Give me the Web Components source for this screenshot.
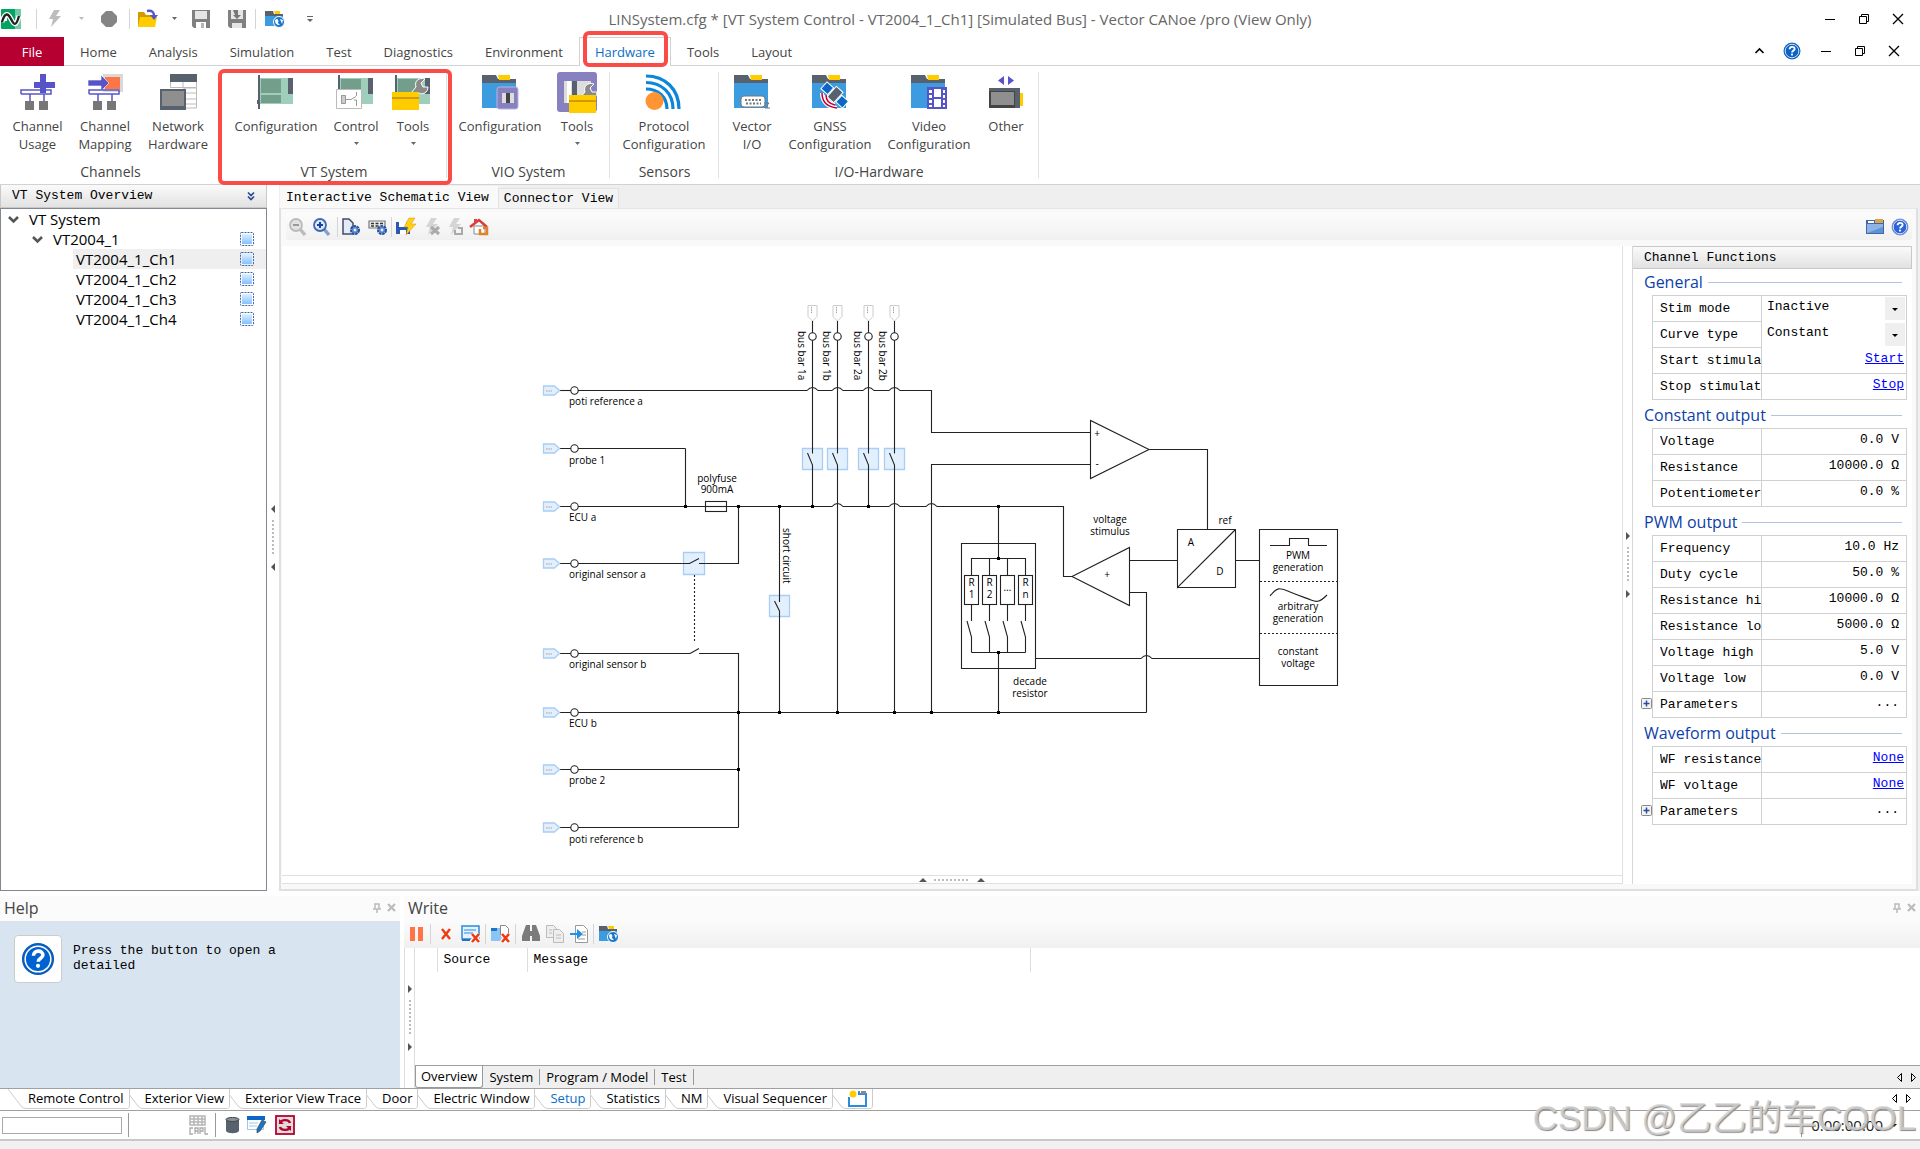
<!DOCTYPE html>
<html lang="en">
<head>
<meta charset="utf-8">
<title>Vector CANoe</title>
<style>
html,body{height:100%;margin:0}
body{background:#fff;font:13px/18px "Open Sans","Noto Sans",sans-serif;color:#444}
</style>
</head>
<body>
<canoe-app></canoe-app>
<script>
const base = `*{box-sizing:border-box}button,input,select{font:inherit;color:inherit;margin:0;padding:0;border:0;background:none;border-radius:0;text-align:inherit}`;
const mono = `font-family:"Liberation Mono","Noto Sans CJK SC",monospace;font-size:13px;color:#000;`;
function define(name, html, init) {
  const t = document.createElement('template');
  t.innerHTML = html.replace('<style>', '<style>' + base);
  customElements.define(name, class extends HTMLElement {
    connectedCallback() {
      if (this.shadowRoot) return;
      this.attachShadow({mode: 'open'}).append(t.content.cloneNode(true));
      if (init) init(this, this.shadowRoot);
    }
  });
}

/* ---------- icons: name -> [width, height, drawing] ---------- */
const folder = `<path fill="#3d9be0" d="M0 6h34v27H0z"/><path fill="#58626e" d="M0 0h14l2 4h18v4H0z"/><path fill="#fc0" d="M16 0h12v5H17z"/>`;
const board = `<path fill="#9fcfbb" d="M3 3h33v26H3z"/><path fill="#749e8c" d="M4 4h20v14H4zM4 20h20v8H4z"/><path fill="#58626e" d="M31 3h5v16h-5zM1 0h2v34H1zM0 25h2v4H0z"/>`;
const wrench = `<path fill="#8a8a8a" stroke="#fff" d="M3 22 13 10C11 4 16 0 22 2l-4 4 2 4h5c0 6-6 8-9 6L8 26z"/>`;
const box = `<path fill="#fc0" d="M0 0h27v18H0z"/><path fill="#d29a00" d="M0 5h27v2H0z"/>`;
const net = `<path fill="none" stroke="#5754c8" stroke-width="1.5" d="M1 20V16h30v4H1M10 20v7M24 20v7"/><path fill="#777" d="M5 27h9v9H5zM19 27h9v9h-9z"/>`;
const gear = `<circle cx="13" cy="12" r="3.6" fill="#9fbce6" stroke="#2450a0" stroke-width="2.8" stroke-dasharray="2.4 .6"/><circle cx="13" cy="12" r="3" fill="#5c86cc"/><circle cx="13" cy="12" r="1.4" fill="#e4eefc"/>`;
const bolt = c => `<path fill="${c}" d="M8 0h6l-4 6h5L5 17l2-8H3z"/>`;
const globe = `<circle cx="13" cy="12" r="5.5" fill="#1775cc" stroke="#fff"/><path fill="#fff" d="M9 10c3-3 4 1 3 3l2 2c-4 0-5-2-5-5zM14 9l3 1-1 4z"/>`;
const sfolder = `<path fill="#3d9be0" d="M0 4h18v12H0z"/><path fill="#58626e" d="M0 1h8l1 3h9v2H0z"/><path fill="#fc0" d="M9 1h6v3h-5z"/>`;
const help = (a, b) => `<circle cx="9" cy="9" r="8" fill="${a}" stroke="${b}"/><circle cx="9" cy="9" r="6.8" fill="none" stroke="#fff" stroke-width=".8"/><path fill="none" stroke="#fff" stroke-width="1.9" d="M6.6 7.3c0-3.2 5-3.2 5-.4 0 1.800-2.500 1.700-2.500 3.600"/><circle cx="9" cy="12.600" r="1.100" fill="#fff"/>`;
const redx = `<path stroke="#fff" stroke-width="5" d="m10 9 7 8m0-8-7 8"/><path stroke="#f03a12" stroke-width="2.600" d="m10 9 7 8m0-8-7 8"/>`;
const I = {
  gap:[1,1,''],
  app:[20,20,`<rect width="20" height="20" rx="1" fill="#00a562"/><path fill="#70caa6" d="M14 0h6v20h-6z"/><path fill="#fff" d="M0 8h6v4H0z"/><path fill="none" stroke="#fff" stroke-width="5" d="M1 13c3-10 6-9 9-3s5 8 8-3"/><path fill="none" stroke="#222" stroke-width="2.400" d="M1 13c3-10 6-9 9-3s5 8 8-3"/>`],
  bolt:[18,18,bolt('#bdbdbd')], stop:[16,16,`<path fill="#858585" d="M5 0h6l5 5v6l-5 5H5l-5-5V5z"/>`],
  open:[20,18,`<path fill="#d29a00" d="M0 2h6l2 3h8v12H0z"/><path fill="#fc0" d="M2 7h17l-2 10H0z"/><path fill="none" stroke="#5754c8" stroke-width="2.400" d="M9 1c5-1 7 1 7 5"/><path fill="#5754c8" d="M12 5h8l-4 5z"/>`],
  save:[18,18,`<path fill="#808080" d="M0 0h18v18H2l-2-2z"/><path fill="#e5e5e5" d="M3 1h12v8H3z"/><path fill="#fff" d="M4 12h10v6H4z"/><path fill="#b5b5b5" d="M9 13h3v5H9z"/>`],
  save2:[18,18,`<path fill="#808080" d="M0 0h18v18H2l-2-2z"/><path fill="#e5e5e5" d="M3 0h12v9H3zM4 13h10v5H4z"/><path fill="#777" d="M5 0h5v5h3l-4 4-4-4h2z"/>`],
  fglobe:[20,18,sfolder+`<g transform="translate(1)">${globe}</g>`],
  caret:[5,3,`<path fill="#666" d="M0 0h5L2.500 3z"/>`], caretl:[5,3,`<path fill="#bbb" d="M0 0h5L2.500 3z"/>`],
  caretb:[6,3,`<path fill="#000" d="M0 0h6L3 3z"/>`],
  more:[6,6,`<path fill="#666" d="M0 0h6v1H0zM0 3h6L3 6z"/>`],
  min:[10,10,`<path stroke="#000" d="M0 5.500h10"/>`],
  max:[10,10,`<path fill="none" stroke="#000" d="M2.500 2.500v-2h7v7h-2M.5 2.500h7v7h-7z"/>`],
  close:[10,10,`<path stroke="#000" stroke-width="1.300" d="m0 0 10 10M10 0 0 10"/>`],
  up:[9,6,`<path fill="none" stroke="#000" stroke-width="1.600" d="m.5 5 4-4 4 4"/>`],
  help:[18,18,help('#0b62c4','#0b62c4')], help2:[18,18,help('#2d62d8','#7897d0')],
  helpbig:[34,34,`<g transform="scale(1.890)">${help('#0062d0','#0b5cb8')}</g>`],
  usage:[35,36,`<path fill="#5754c8" d="M20 0h6v8h9v6h-9v5h-6v-5h-6V8h6z"/>`+net],
  mapping:[35,36,`<path fill="#d9d9d9" d="M15 0h20v18H15z"/><path fill="#ff7545" d="M17 3h15v12H17z"/><path fill="#5754c8" stroke="#fff" stroke-width=".6" d="M0 6h13V1l8 8-8 8v-5H0z"/>`+net],
  network:[37,36,`<path fill="#fff" stroke="#bbb" d="M10.500 7.500h26v6h-26zM24 14h12.500v20H24z"/><path stroke="#bbb" d="M23 8v6M26 19h10M26 25h10M26 30h10"/><path fill="#58626e" d="M10 0h27v8H10z"/><path fill="#58626e" d="M0 15h26v21H0z"/><path fill="#8f8f8f" d="M2 17h22v15H2z"/>`],
  vtconf:[38,34,board],
  vtctrl:[38,34,board+`<path fill="#fff" stroke="#bbb" d="M-.5 14.500h25v19H-.5z"/><path fill="#ccc" stroke="#999" d="M4.500 20.500h4v8h-4z"/><path fill="none" stroke="#999" d="M9 24.500h5l5-3M19.500 17v4M19.500 31v-6H17"/>`],
  vttool:[38,34,board+`<g transform="translate(9 2)">${wrench}</g><g transform="translate(-2 17)">${box}</g>`],
  vioconf:[36,34,folder+`<rect x="15" y="12" width="21" height="22" rx="2.500" fill="#8881c0" stroke="#b9b5de"/><path fill="#ddd" d="M20 18h12v10H20z"/><path fill="#444" d="M24 18h4v10h-4z"/>`],
  viotool:[40,40,`<rect width="40" height="40" rx="3" fill="#8881c0"/><path fill="#ddd" d="M7 9h27v22H7z"/><path fill="#fff" d="M10 9h4v22h-4z"/><path fill="#58626e" d="M15 9h5v15h-5z"/><g transform="translate(15 10)">${wrench}</g><g transform="translate(12 23)">${box}</g>`],
  sensor:[36,36,`<g fill="none" stroke="#0b86d8" stroke-width="3.200"><path d="M0 2c19 0 33 13 33 33M0 8.500c16 0 27 11 27 26.500M0 15c12 0 21 8 21 20"/></g><circle cx="8.500" cy="27" r="9" fill="#ff9433"/>`],
  vector:[36,34,folder+`<rect x="7" y="21" width="24" height="11" rx="3" fill="#fff" stroke="#777"/><path stroke="#777" stroke-width="2" stroke-dasharray="2 1.500" d="M11 25h17M12 28.500h15"/><path fill="none" stroke="#777" d="M30 28h5l-4 5h5"/>`],
  gnss:[36,34,folder+`<g transform="rotate(42 22 20)"><path fill="#0b66c8" stroke="#fff" d="M8 15h9v9H8zM28 15h9v9h-9z"/><path fill="#58626e" stroke="#fff" d="M18 12h9v14h-9z"/></g><path fill="none" stroke="#fff" stroke-width="4" d="M10 18c0 9 6 14 15 15M14 20c0 6 4 9 9 10"/><path fill="none" stroke="#c00030" stroke-width="1.500" d="M10 18c0 9 6 14 15 15M14 20c0 6 4 9 9 10"/>`],
  video:[36,34,folder+`<path fill="#fff" stroke="#5754c8" stroke-width="2" d="M17 13h18v20H17zM22 13v20M31 13v20M22 23h9"/><path stroke="#5754c8" stroke-width="4" stroke-dasharray="2 3" d="M19 13v20M33 13v20"/>`],
  other:[34,32,`<path fill="#5754c8" d="m15 0-6 4.500 6 4.500zM19 0l6 4.500-6 4.500z"/><path fill="#fc0" d="M30 17h4v13h-4z"/><path fill="#444" d="M0 12h31v20H0z"/><path fill="#58626e" d="M0 12h31v3H0zM26 15h5v17h-5z"/><path fill="#8f8f8f" d="M2 16h23v13H2z"/>`],
  zout:[18,18,`<path stroke="#bbb" stroke-width="3.500" d="m11 11 5 6"/><circle cx="7" cy="7" r="6" fill="#e2e2e2" stroke="#bbb" stroke-width="1.800"/><path stroke="#999" stroke-width="2" d="M4 7h6"/>`],
  zin:[18,18,`<path stroke="#84a0cf" stroke-width="3.500" d="m11 11 5 6"/><circle cx="7" cy="7" r="6" fill="#dbe8fb" stroke="#3f68b4" stroke-width="1.800"/><path stroke="#1d3f96" stroke-width="2" d="M4 7h6M7 4v6"/>`],
  pagegear:[18,18,`<path fill="#e4eaf6" stroke="#444c66" stroke-width="1.500" d="M1 1h6l4 4v11H1z"/>`+gear],
  listgear:[20,18,`<path fill="#eee" stroke="#777" stroke-width="1.200" d="M1 3h16v7H1z"/><path stroke="#333" stroke-dasharray="3 1.500" stroke-width="1.500" d="M3 5.500h12M3 8h8"/><g transform="translate(1)">${gear}</g>`],
  savebolt:[20,18,`<path fill="#2b58b0" d="M0 4h14v12H0z"/><path fill="#fff" d="M3 4h7v5H3zM4 12h6v4H4z"/><g transform="translate(5)" stroke="#e09000" stroke-width=".5">${bolt('#ffd21a')}</g>`],
  boltx:[18,18,bolt('#d5d5d5')+`<path stroke="#aaa" stroke-width="3" d="m8 9 8 7m0-7-8 7"/>`],
  boltr:[18,18,bolt('#d5d5d5')+`<path fill="none" stroke="#aaa" stroke-width="2" d="M9 12v4h7v-6h-4"/>`],
  home:[20,18,`<path fill="#fff" stroke="#888" d="M4 8h11v8H4z"/><path fill="none" stroke="#d93c3c" stroke-width="2.500" d="m0 9 9-7 8 7"/><path fill="#e04040" d="M4 1h3v4H4z"/><path fill="none" stroke="#e08228" stroke-width="2.500" d="M10 11v5h7v-6h-4"/>`],
  folder2:[18,15,`<path fill="#3e66a8" d="M0 1h18v14H0z"/><path fill="#d9a545" d="M9 0h8v4H9z"/><path fill="#8db4e4" d="M1 5h16v9H1z"/><path fill="#5f92d4" d="m1 14 16-6v6z"/><path fill="#fff" d="M2 2h6v2H2z"/>`],
  chev2:[8,9,`<path fill="none" stroke="#2a4a8e" stroke-width="1.700" d="m1 .5 3 3 3-3m-6 4 3 3 3-3"/>`],
  tdown:[11,7,`<path fill="none" stroke="#555" stroke-width="2.600" d="m1 1 4.500 4.500L10 1"/>`],
  chan:[14,14,`<defs><linearGradient id="g" x2="0" y2="1"><stop stop-color="#dff0ff"/><stop offset="1" stop-color="#84c0ff"/></linearGradient></defs><path fill="url(#g)" d="M2 2h10v10H2z"/><rect x=".5" y=".5" width="13" height="13" rx="1" fill="none" stroke="#3b68ac" stroke-dasharray="2 1"/>`],
  pin:[8,10,`<path fill="none" stroke="#bbb" stroke-width="1.500" d="M2 6V1h4v5M0 6h8M4 6v4"/>`],
  x:[9,9,`<path stroke="#bbb" stroke-width="2.200" d="m1 1 7 7m0-7L1 8"/>`],
  pause:[14,14,`<path fill="#ff7545" d="M0 0h5v14H0zM8 0h5v14H8z"/>`],
  redx:[10,10,`<path stroke="#f03a12" stroke-width="2.400" d="m1 0 8 10m0-10L1 10"/>`],
  winx:[20,18,`<path fill="#e5f2ff" stroke="#2c8bdc" stroke-width="1.500" d="M1 1h17v13H1z"/><path stroke="#2c8bdc" d="M3 5h12M3 8h9"/><path fill="#2571bd" d="M1 14h8v2H1z"/><g transform="translate(1)">${redx}</g>`],
  foldx:[20,18,`<path fill="#8cc5f5" d="M0 3h12v13H0z"/><path fill="#1775cc" d="M0 3h6v3H0z"/><path fill="#fff" stroke="#888" d="M9.500.5h5l3 3v8h-8z"/><g transform="translate(1)">${redx}</g>`],
  binoc:[18,18,`<path fill="#7b7b7b" d="M4 0h4v16H0v-5zM10 0h4l4 11v5h-8zM7 6h4v5H7z"/>`],
  copy:[18,18,`<path fill="#eee" stroke="#bbb" d="M.5.5h7l3 3v9H.5z"/><path fill="#eee" stroke="#bbb" d="M7.500 4.500h6l4 4v9h-10z"/><path stroke="#bbb" d="M10 10h5M10 13h5M3 5h3M3 8h3"/>`],
  imp:[18,18,`<path fill="#fff" stroke="#999" d="M5.500.5h8l4 4v13h-12z"/><path stroke="#999" d="M12 7h4M12 10h4M8 14h7"/><path fill="#2090e8" d="M0 8h7V4l6 5-6 5v-4H0z"/>`],
  addtab:[19,17,`<path fill="none" stroke="#2c8bdc" stroke-width="2" d="M1 7v9h17V4h-7V1"/><circle cx="5" cy="4" r="3.500" fill="#fc0"/><path fill="#888" d="M13 1h5v3h-5z"/>`],
  capl:[20,20,`<path fill="none" stroke="#b5b5b5" stroke-width="1.500" d="M1 1h15v9H1zM1 4h15M1 7h15M5 1v9M9 1v9M13 1v9"/><path fill="none" stroke="#aaa" stroke-width="1.300" d="M4 13H1v6h3M6 19v-6h3v6M6 16h3M11 19v-6h3v3h-3M16 12v7h3"/>`],
  db:[13,16,`<path fill="#58626e" d="M0 3h13v11c-2 3-11 3-13 0z"/><ellipse cx="6.500" cy="2.500" rx="6.500" ry="2" fill="#8a929c" stroke="#444"/>`],
  edit:[20,18,`<path fill="#fff" stroke="#9cc8ee" d="M.5.5h16v13H.5z"/><path fill="#0b66c8" d="M0 0h18v4H0z"/><path stroke="#9cc8ee" d="M2 7h9M2 10h8"/><path fill="#1775cc" stroke="#444" stroke-width=".7" d="m15 4 4 2-6 9-3 2v-4z"/>`],
  reload:[20,20,`<rect x="1" y="1" width="18" height="18" fill="#ddd" stroke="#b80030" stroke-width="1.800"/><path fill="none" stroke="#b80030" stroke-width="2.400" d="M5 9c0-5 9-5 10-1M15 11c0 5-9 5-10 1"/><path fill="#b80030" d="M4 4v5h5zM16 16v-5h-5z"/>`],
  al:[4,8,`<path fill="#555" d="M4 0v8L0 4z"/>`], ar:[4,8,`<path fill="#555" d="M0 0v8l4-4z"/>`], au:[8,4,`<path fill="#555" d="M0 4h8L4 0z"/>`],
  nl:[5,9,`<path fill="none" stroke="#000" d="M4.500.5v8l-4-4z"/>`], nr:[5,9,`<path fill="none" stroke="#000" d="M.5.5v8l4-4z"/>`],
  plus:[11,11,`<rect x=".5" y=".5" width="10" height="10" rx="1" fill="#f4f4f4" stroke="#888"/><path stroke="#2a4a9e" stroke-width="1.500" d="M2.500 5.500h6M5.500 2.500v6"/>`]
};
define('ui-icon', `<style>:host{display:block;flex:none}svg{display:block;overflow:visible}</style>`, (el, r) => {
  const [w, h, d] = I[el.getAttribute('name')];
  r.innerHTML += `<svg width="${w}" height="${h}" viewBox="0 0 ${w} ${h}" aria-hidden="true">${d}</svg>`;
});

/* A row of tool buttons: "icon:cell-width", "|" is a divider */
define('tool-strip', `<style>:host{display:flex;align-items:center}button{display:flex;justify-content:center;align-items:center;height:20px;flex:none}i{flex:none;width:1px;height:20px;background:#d5d5d5}b{flex:none}</style>`, (el, r) => {
  for (const item of el.getAttribute('items').split(' ')) {
    const [n, w] = item.split(':');
    r.innerHTML += n === '|' ? '<i></i>' : n === 'gap' ? `<b style="width:${w}px"></b>` : `<button aria-label="${n}" style="width:${w}px"><ui-icon name="${n}"></ui-icon></button>`;
  }
});

define('title-bar', `<style>:host{display:flex;height:37px;align-items:center}
p{margin:0;flex:none;text-align:center;color:#666;font-size:15px;white-space:nowrap}
.l{flex:1 0 0}.r{flex:1 0 0;display:flex;justify-content:flex-end}</style>
<tool-strip class="l" items="app:22 gap:14 | bolt:36 caretl:16 stop:40 | open:36 caret:17 save:36 save2:36 | fglobe:38 more:32"></tool-strip>
<p>LINSystem.cfg * [VT System Control - VT2004_1_Ch1] [Simulated Bus] - Vector CANoe /pro (View Only)</p>
<div class="r"><tool-strip items="min:34 max:34 close:34 gap:5"></tool-strip></div>`);

define('ribbon-tabs', `<style>:host{display:flex;height:29px;border-bottom:1px solid #d2d2d2}
nav{display:flex;height:29px}button{height:29px;padding:1px 16px 0;position:relative;white-space:nowrap}
.file{background:#b70032;color:#fff;width:64px;text-align:center;padding:0}
.on{background:#fff;border:1px solid #d2d2d2;border-bottom:0;color:#0a6ec8;padding:0 15px}
.on::after{content:"";position:absolute;inset:-7px 2px -1px 3px;border:4px solid #fa4b46;border-radius:6px}
span{flex:1}</style><nav></nav><span></span><tool-strip items="up:32 help:34 min:34 max:34 close:34 gap:9"></tool-strip>`, (el, r) => {
  r.querySelector('nav').innerHTML = ['File','Home','Analysis','Simulation','Test','Diagnostics','Environment','Hardware','Tools','Layout']
    .map(t => `<button class="${t === 'File' ? 'file' : t === 'Hardware' ? 'on' : ''}">${t}</button>`).join('');
});

define('ribbon-group', `<style>:host{display:flex;flex-direction:column;position:relative;height:118px;padding-bottom:3px}
:host::before{content:"";position:absolute;right:0;top:6px;bottom:6px;width:1px;background:#e2e2e2}
:host([plain])::before{display:none}
:host([marked])::after{content:"";position:absolute;inset:3px -5px -1px -3px;border:4px solid #fa4b46;border-radius:6px;z-index:2}
.b{display:flex;flex:1}.t{text-align:center;height:18px;font-size:14px}</style><div class="b"><slot></slot></div><div class="t"></div>`, (el, r) => {
  el.style.width = el.getAttribute('w') + 'px';
  r.querySelector('.t').textContent = el.getAttribute('label');
});
define('ribbon-button', `<style>:host{display:block;flex:none}button{width:100%;display:flex;flex-direction:column;align-items:center;text-align:center;line-height:18px}
.i{height:51px;display:flex;align-items:center;justify-content:center}span{white-space:pre}.c{margin-top:7px}</style>
<button><div class="i"></div><span></span></button>`, (el, r) => {
  el.style.width = el.getAttribute('w') + 'px';
  r.querySelector('.i').innerHTML = `<ui-icon name="${el.getAttribute('icon')}"></ui-icon>`;
  r.querySelector('span').textContent = el.getAttribute('label').replace('/ ', '\n');
  if (el.hasAttribute('menu')) r.querySelector('button').insertAdjacentHTML('beforeend', '<ui-icon class="c" name="caret"></ui-icon>');
});
define('app-ribbon', `<style>:host{display:flex;border-bottom:1px solid #d2d2d2}</style>
<ribbon-group w="221" label="Channels" plain><ribbon-button w="75" icon="usage" label="Channel/ Usage"></ribbon-button><ribbon-button w="60" icon="mapping" label="Channel/ Mapping"></ribbon-button><ribbon-button w="86" icon="network" label="Network/ Hardware"></ribbon-button></ribbon-group>
<ribbon-group w="226" label="VT System" marked><ribbon-button w="110" icon="vtconf" label="Configuration"></ribbon-button><ribbon-button w="50" icon="vtctrl" label="Control" menu></ribbon-button><ribbon-button w="64" icon="vttool" label="Tools" menu></ribbon-button></ribbon-group>
<ribbon-group w="163" label="VIO System"><ribbon-button w="106" icon="vioconf" label="Configuration"></ribbon-button><ribbon-button w="48" icon="viotool" label="Tools" menu></ribbon-button></ribbon-group>
<ribbon-group w="109" label="Sensors"><ribbon-button w="108" icon="sensor" label="Protocol/ Configuration"></ribbon-button></ribbon-group>
<ribbon-group w="320" label="I/O-Hardware"><ribbon-button w="66" icon="vector" label="Vector/ I/O"></ribbon-button><ribbon-button w="90" icon="gnss" label="GNSS/ Configuration"></ribbon-button><ribbon-button w="108" icon="video" label="Video/ Configuration"></ribbon-button><ribbon-button w="46" icon="other" label="Other"></ribbon-button></ribbon-group>`);

define('system-tree', `<style>:host{display:flex;flex-direction:column;width:267px;flex:none}
header{${mono}display:flex;align-items:center;justify-content:space-between;height:23px;padding:0 11px;border:1px solid #c8c8c8;border-top:0;background:linear-gradient(#fafafa,#e2e2e2)}
ul{flex:1;margin:0;list-style:none;border:1px solid #828790;padding:0;color:#000;font-size:15px}
li{display:flex;height:20px;align-items:center;line-height:20px;padding-right:12px}
li span{flex:1;padding-left:2px}.a{padding-left:7px}.b{padding-left:31px}.d{margin-right:8px}.c span{margin-left:73px}.on{background:linear-gradient(#efefef,#efefef) 72px 0 no-repeat}</style>
<header>VT System Overview<ui-icon name="chev2"></ui-icon></header>
<ul><li class="a"><ui-icon class="d" name="tdown"></ui-icon><span>VT System</span></li><li class="b"><ui-icon class="d" name="tdown"></ui-icon><span>VT2004_1</span><ui-icon name="chan"></ui-icon></li></ul>`, (el, r) => {
  for (let i = 1; i < 5; i++) r.querySelector('ul').insertAdjacentHTML('beforeend', `<li class="c${i === 1 ? ' on' : ''}"><span>VT2004_1_Ch${i}</span><ui-icon name="chan"></ui-icon></li>`);
});

/* Splitter bar with two arrows and a dotted grip */
define('split-grip', `<style>:host{display:flex;align-items:center;justify-content:center;gap:7px;flex-direction:column;flex:none}
:host([row]){flex-direction:row}i{width:2px;height:36px;background:repeating-linear-gradient(#bbb 0 2px,transparent 2px 4px)}
:host([row]) i{height:2px;width:36px;background:repeating-linear-gradient(90deg,#bbb 0 2px,transparent 2px 4px)}</style>`, (el, r) => {
  const n = el.getAttribute('arrow');
  r.innerHTML += `<ui-icon name="${n}"></ui-icon><i></i><ui-icon name="${n}"></ui-icon>`;
});

/* ---------- schematic ---------- */
define('schematic-view', `<style>:host{display:flex;align-items:center;justify-content:center;background:#fff;min-width:0;overflow:hidden}
svg{display:block;flex:none;font-size:10px;fill:#000}.w{fill:none;stroke:#222;stroke-width:1.1}.s{fill:#e2f0fd;stroke:#a9cdf5;stroke-width:1.3}.n{fill:#fff;stroke:#222;stroke-width:1.1}.m{text-anchor:middle}.g{fill:#fff;stroke:#ccc}</style>
<svg width="832" height="570" viewBox="536 276 832 570" role="img" aria-label="VT2004 channel schematic"></svg>`, (el, r) => {
  const wire = d => `<path class="w" d="${d}"/>`, dot = (x, y) => `<rect x="${x - 1.5}" y="${y - 1.5}" width="3" height="3"/>`;
  const text = (x, y, s, m = 1) => `<text x="${x}" y="${y}"${m ? ' class="m"' : ''}>${s}</text>`;
  const vtext = (x, y, s) => `<text transform="translate(${x} ${y}) rotate(90)">${s}</text>`;
  const hop = x => `H${x - 5.5}q5.500 -6 11 0`;
  let s = '';
  for (const [y, ty, name, end] of [[390.5,405,'poti reference a',579],[448.5,464,'probe 1',685.5],[506.5,521,'ECU a',705],[563.5,578,'original sensor a',690],[653.5,668,'original sensor b',690],[712.5,727,'ECU b',1146.5],[769.5,784,'probe 2',738.5],[827.5,843,'poti reference b',738.5]])
    s += wire(`M559 ${y}H${end}`) + `<path class="s" d="M543.500 ${y - 4.5}h11l5 4.500-5 4.500h-11z"/><path stroke="#b98" stroke-dasharray="1.500 .8" d="M546 ${y + .5}h6"/><circle class="n" cx="574.500" cy="${y}" r="3.700"/>` + text(569, ty, name, 0);
  s += wire(`M578 390.500${hop(812.5)}${hop(837.5)}${hop(868.5)}${hop(894.5)}H931.500V432.500H1090.500M685.500 448.500V506.500`);
  s += wire(`M727 506.500${hop(837.5)}${hop(894.5)}${hop(931.5)}H1063.500V576.500H1072M738.500 506.500V563.500H699M699 653.500H738.500V827.500M690 653.500 699 648.500`);
  [[812.5,506.5,798,'1a'],[837.5,712.5,823,'1b'],[868.5,506.5,854,'2a'],[894.5,712.5,879,'2b']].forEach(([x, b, tx, n]) => {
    s += `<path class="g" d="M${x - 4.5} 305.500h9v11l-4.500 4.500-4.500-4.500z"/><path stroke="#b98" stroke-dasharray="1.500 .8" d="M${x - 1} 307v6"/>`;
    s += `<path class="s" d="M${x - 10} 448.500h20v21h-20z"/>` + wire(`M${x} 321V453.500M${x - 5} 453 ${x} 465V${b}`) + `<circle class="n" cx="${x}" cy="336.500" r="3.700"/>` + vtext(tx, 331, 'bus bar ' + n) + dot(x, b);
  });
  s += `<path class="s" d="M683.500 552.500h21v22h-21zM769.500 595.500h20v21h-20z"/>` + wire('M683 563.500H689.500L699 558.500M699 563.500H705M779.500 506.500V602M774.500 601 779.500 611V712.500');
  s += `<path class="w" stroke-dasharray="2 2" d="M694.500 575V643"/><rect class="n" x="705.500" y="501.500" width="21" height="10"/>` + wire('M705 506.500H727');
  s += wire('M931.500 712.500V464.500H1090.500M1090.500 420.500V478.500L1149 449.500ZM1149 449.500H1207.500V529.500M1129.500 547.500V605.500L1072 576.500ZM1130 560.500H1177.500M1130 592.500H1146.500V712.500M1177.500 529.500H1235.500V587.500H1177.500ZL1177.500 587.500 1235.500 529.500M1235.500 560.500H1259.500');
  s += wire(`M1259.500 529.500H1337.500V685.500H1259.500ZM1035.500 658.500${hop(1146.5)}H1259.500M1270 545.500H1289.500V538.500H1308.500V545.500H1327M1270 596C1278 586 1280 588 1290 592S1306 598 1311 600 1319 603 1327 595`);
  s += `<path class="w" stroke-dasharray="2 2" d="M1260 581.500H1337M1260 633.500H1337"/>`;
  s += wire('M961.500 543.500H1035.500V668.500H961.500ZM998.500 506.500V558.500M971.500 576V558.500H1025.500V576M989.500 558.500V576M1007.500 558.500V576M971.500 652.500H1025.500M998.500 652.500V712.500');
  [[971.5,'R','1'],[989.5,'R','2'],[1007.5,'…',''],[1025.5,'R','n']].forEach(([x, a, b]) => {
    s += `<rect class="n" x="${x - 7}" y="575.500" width="14" height="29"/>` + wire(`M${x} 604.500V621M${x - 4.5} 621 ${x} 637V652.500`) + text(x, b ? 586 : 591, a) + (b ? text(x, 598, b) : '');
  });
  for (const [x, y] of [[685.5,506.5],[738.5,506.5],[779.5,506.5],[998.5,506.5],[738.5,712.5],[779.5,712.5],[931.5,712.5],[998.5,712.5],[738.5,769.5],[998.5,558.5],[998.5,652.5]]) s += dot(x, y);
  for (const a of [[717,482,'polyfuse'],[717,493,'900mA'],[1225,524,'ref'],[1110,523,'voltage'],[1110,535,'stimulus'],[1107,578,'+'],[1097,437,'+'],[1097,467,'-'],[1191,546,'A'],[1220,575,'D'],[1298,559,'PWM'],[1298,571,'generation'],[1298,610,'arbitrary'],[1298,622,'generation'],[1298,655,'constant'],[1298,667,'voltage'],[1030,685,'decade'],[1030,697,'resistor']]) s += text(...a);
  r.querySelector('svg').innerHTML = s + vtext(783, 528, 'short circuit');
});

/* ---------- channel functions ---------- */
define('function-section', `<style>:host{display:block;padding:0 6px 0 11px}
h3{margin:0;height:26px;display:flex;align-items:center;gap:5px;font-size:16px;font-weight:400;color:#0d3fa8;padding-right:4px;white-space:nowrap}h3::after{content:"";flex:1;height:1px;background:#b3c3e0}
table{${mono}border-collapse:collapse;table-layout:fixed;width:255px;margin:0 0 2px 8px}
td,th{height:26px;padding:0;border:1px solid #d0d0d0;font-weight:400;text-align:left;white-space:nowrap}
th{width:109px;padding-left:7px;position:relative}th div{overflow:hidden}th ui-icon{position:absolute;left:-12px;top:6px}td{text-align:right;padding:0 7px 3px}
.s{padding:0;border-bottom:0;border-top-color:transparent}tr:first-child .s{border-top-color:#d0d0d0}.s label{display:grid;padding:1px}.s select,.s ui-icon{grid-area:1/1}select{appearance:none;width:100%;height:23px;padding:0 0 3px 4px;text-align:left}
.s ui-icon{justify-self:end;align-self:stretch;background:#efefef;padding:11px 7px 9px;pointer-events:none}
.k{padding-right:2px}a{color:#00f}.after .k{border-top:0}</style><h3></h3><table><tbody></tbody></table>`, (el, r) => {
  r.querySelector('h3').textContent = el.getAttribute('label');
  r.querySelector('tbody').innerHTML = el.getAttribute('rows').split(';').map(row => {
    const [k, v, kind] = row.split('=');
    const th = `<th scope="row"><div>${k}</div>${kind === 'more' ? '<ui-icon name="plus"></ui-icon>' : ''}</th>`;
    if (kind === 'pick') return `<tr>${th}<td class="s"><label><select aria-label="${k}"><option>${v}</option></select><ui-icon name="caretb"></ui-icon></label></td></tr>`;
    return `<tr class="${k === 'Start stimula' ? 'after' : ''}">${th}<td class="${kind === 'link' ? 'k' : ''}">${kind === 'link' ? `<a href="#">${v}</a>` : v}</td></tr>`;
  }).join('');
});
define('channel-functions', `<style>:host{display:block;width:280px;flex:none;background:#fff;border-left:1px solid #d8d8d8}
header{${mono}height:23px;line-height:21px;padding-left:11px;border:1px solid #c8c8c8;border-left:0;background:linear-gradient(#fafafa,#e2e2e2)}</style>
<header>Channel Functions</header>
<function-section label="General" rows="Stim mode=Inactive=pick;Curve type=Constant=pick;Start stimula=Start=link;Stop stimulat=Stop=link"></function-section>
<function-section label="Constant output" rows="Voltage=0.0 V;Resistance=10000.0 Ω;Potentiometer=0.0 %"></function-section>
<function-section label="PWM output" rows="Frequency=10.0 Hz;Duty cycle=50.0 %;Resistance hi=10000.0 Ω;Resistance lo=5000.0 Ω;Voltage high=5.0 V;Voltage low=0.0 V;Parameters=...=more"></function-section>
<function-section label="Waveform output" rows="WF resistance=None=link;WF voltage=None=link;Parameters=...=more"></function-section>`);

define('schematic-workspace', `<style>:host{display:flex;flex-direction:column;flex:1;min-width:0;background:#efefef}
nav{${mono}display:flex;align-items:flex-end;height:23px;padding-left:1px}nav button{height:20px;padding:0 5px;border:1px solid #e2e2e2;border-bottom:0;background:#f3f3f3;white-space:nowrap}
nav .on{height:22px;background:#f9f9f9;border-color:#f9f9f9;padding:0 8px 0 5px}
.p{flex:1;display:flex;flex-direction:column;background:#f9f9f9;border:1px solid #e0e0e0;border-width:1px 2px 2px 2px;border-top-color:#e6e6e6;margin-right:2px;min-height:0}
.t{display:flex;justify-content:space-between;height:27px;margin:4px 4px 6px 5px;background:linear-gradient(#fcfcfc,#f0f0f0);border-radius:3px}
.m{display:flex;flex:1;min-height:0;margin:0 4px 5px 1px}.c{flex:1;display:flex;flex-direction:column;border-right:1px solid #e0e0e0;background:#fff;min-width:0}
schematic-view{flex:1}.h{height:9px;border:solid #e0e0e0;border-width:1px 0}.v{width:9px;background:#fff}</style>
<nav><button class="on">Interactive Schematic View</button><button>Connector View</button></nav>
<div class="p"><div class="t"><tool-strip items="zout:24 zin:24 gap:3 | pagegear:26 listgear:27 | savebolt:28 boltx:23 boltr:24 home:25"></tool-strip><tool-strip items="folder2:24 help2:25"></tool-strip></div>
<div class="m"><div class="c"><schematic-view></schematic-view><split-grip class="h" row arrow="au"></split-grip></div><split-grip class="v" arrow="ar"></split-grip><channel-functions></channel-functions></div></div>`);

define('dock-panel', `<style>:host{display:flex;flex-direction:column;min-width:0}
header{display:flex;align-items:center;gap:6px;height:25px;background:#fbfbfb;padding:0 4px 2px;flex:none}h2{flex:1;margin:0;font-size:16px;font-weight:400}</style>
<header><h2></h2><ui-icon name="pin"></ui-icon><ui-icon name="x"></ui-icon></header><slot></slot>`, (el, r) => { r.querySelector('h2').textContent = el.getAttribute('label'); });
define('help-content', `<style>:host{display:flex;flex:1;background:#d8e4f0;padding:14px;gap:11px}button{width:48px;height:48px;background:#fff;border:1px solid #ccc;border-radius:4px;display:flex;align-items:center;justify-content:center}
p{${mono}margin:8px 0;line-height:15px;width:224px}</style><button aria-label="Open help"><ui-icon name="helpbig"></ui-icon></button><p>Press the button to open a detailed</p>`);
define('write-content', `<style>:host{display:flex;flex-direction:column;flex:1;min-width:0}
.t{height:27px;background:linear-gradient(#fbfbfb,#f0f0f0);padding-bottom:2px}
.m{flex:1;display:flex}.v{width:11px;border:solid #ddd;border-width:0 1px}.c{flex:1;display:flex;flex-direction:column}
.g{flex:1}table{${mono}border-collapse:collapse}th{font-weight:400;text-align:left;height:24px;border-right:1px solid #ddd;padding:0 0 0 6px}
nav{display:flex;border-top:1px solid #a0a0a0;background:#efefef;height:23px;color:#000;align-items:center}
nav button{padding:0 6px;height:16px;line-height:16px;border-right:1px solid #999;white-space:nowrap}nav .on{height:22px;margin:-1px 0 0;background:#fff;border:1px solid #999;border-top:0;padding:0 5px;border-radius:0 0 3px 3px}nav span{flex:1}</style>
<tool-strip class="t" items="pause:26 | redx:29 winx:22 gap:3 | foldx:29 | binoc:29 copy:19 imp:29 | fglobe:30"></tool-strip>
<div class="m"><split-grip class="v" arrow="ar"></split-grip><div class="c"><div class="g"><table><tr><th style="width:22px"></th><th style="width:90px">Source</th><th style="width:503px">Message</th></tr></table></div>
<nav><button class="on">Overview</button><button>System</button><button>Program / Model</button><button>Test</button><span></span><tool-strip items="nl:13 nr:14"></tool-strip></nav></div></div>`);
define('desktop-tabs', `<style>:host{display:flex;height:23px;border:solid #a0a0a0;border-width:1px 0;color:#000;padding-left:7px;overflow:hidden}
button{position:relative;height:20px;padding:0 5px 2px 15px;display:flex;align-items:center;white-space:nowrap;border:solid #ccc;border-width:0 1px 0 0;border-radius:0 0 4px 0;overflow:hidden}
button:first-child{padding-left:21px}button:first-child svg{left:0}svg{position:absolute;left:-6px;top:0}.on{color:#0a6ec8}nav{display:flex;height:22px}span{flex:1}tool-strip{padding:0 5px 3px 0}</style><nav></nav><span></span><tool-strip items="nl:14 nr:14"></tool-strip>`, (el, r) => {
  r.querySelector('nav').innerHTML = ['Remote Control','Exterior View','Exterior View Trace','Door','Electric Window','Setup','Statistics','NM','Visual Sequencer','+'].map(t =>
    `<button class="${t === 'Setup' ? 'on' : ''}"${t === '+' ? ' aria-label="New desktop"' : ''}><svg width="200" height="20"><path fill="none" stroke="#ccc" d="M1 0 14 17q2 2.500 5 2.500h180"/></svg>${t === '+' ? '<ui-icon name="addtab"></ui-icon>' : t}</button>`).join('');
});
define('status-bar', `<style>:host{display:flex;align-items:center;height:30px;border-bottom:2px solid #c8c8c8;position:relative}
input{width:120px;height:17px;border:1px solid #aaa;margin:0 6px 0 2px}i{width:1px;height:24px;background:#999}.f{flex:1}.time{color:#222;display:flex;align-items:center;gap:8px;padding:0 23px 0 9px;border-left:1px solid #999;height:24px;font-size:15px}
.mark{position:absolute;right:4px;bottom:-3px;font:35px/48px "Liberation Sans","Noto Sans CJK SC",sans-serif;color:rgba(215,215,215,.8);text-shadow:1px 1px 1px #888;white-space:nowrap}</style>
<input aria-label="Search"><i></i><tool-strip items="gap:54 capl:32"></tool-strip><i></i><tool-strip items="db:33 edit:16 reload:40"></tool-strip><span class="f"></span><span class="time">0:00:00:00<ui-icon name="caretb"></ui-icon></span><span class="mark">CSDN @乙乙的车COOL</span>`);

define('canoe-app', `<style>:host{display:flex;flex-direction:column;height:100%;overflow:hidden}
main{display:flex;flex:1;min-height:0}.gap{width:12px;background:#fff}
.dock{display:flex;height:192px;flex:none;gap:4px}.dock dock-panel:first-child{width:400px;flex:none}.dock dock-panel:last-child{flex:1}footer{height:8px;background:#f1f1f1;flex:none}.sp{height:5px;flex:none}
title-bar,ribbon-tabs,app-ribbon,desktop-tabs,status-bar{flex:none}</style>
<title-bar></title-bar><ribbon-tabs></ribbon-tabs><app-ribbon></app-ribbon>
<main><system-tree></system-tree><split-grip class="gap" arrow="al"></split-grip><schematic-workspace></schematic-workspace></main><div class="sp"></div>
<div class="dock"><dock-panel label="Help"><help-content></help-content></dock-panel><dock-panel label="Write"><write-content></write-content></dock-panel></div>
<desktop-tabs></desktop-tabs><status-bar></status-bar><footer></footer>`);
</script>
</body>
</html>
